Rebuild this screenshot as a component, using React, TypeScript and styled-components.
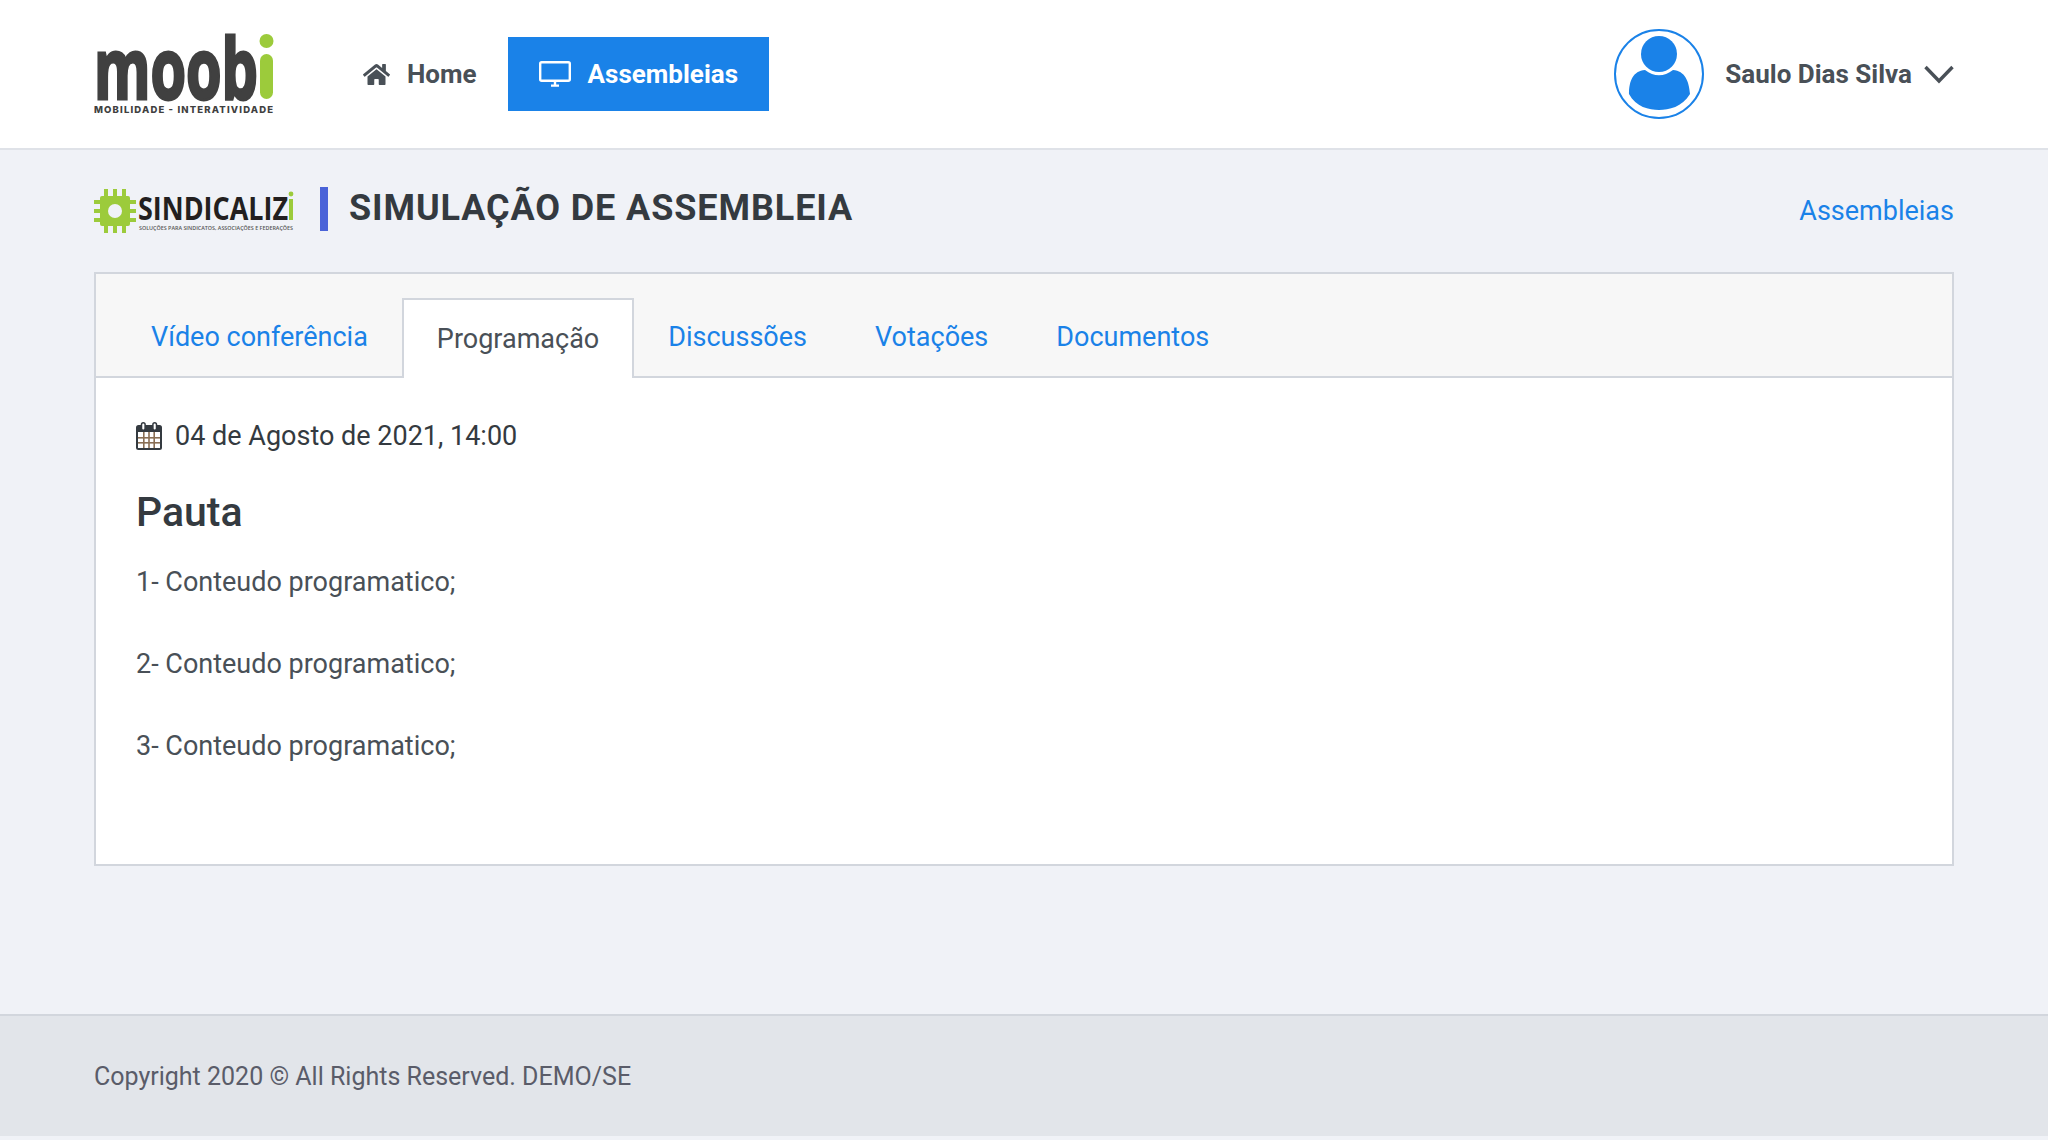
import React from 'react';
import styled, { createGlobalStyle } from 'styled-components';
import { FaHome } from 'react-icons/fa';

const GlobalStyle = createGlobalStyle`
  html, body {
    margin: 0;
    padding: 0;
    background: #f0f2f7;
    font-family: Roboto, "Liberation Sans", sans-serif;
    color: #343a40;
  }
  * {
    box-sizing: border-box;
  }
`;

const Page = styled.div`
  height: 1140px;
  display: flex;
  flex-direction: column;
  overflow: hidden;
`;

const Header = styled.header`
  height: 150px;
  flex: none;
  display: flex;
  align-items: center;
  justify-content: space-between;
  padding: 0 94px;
  background: #fff;
  border-bottom: 2px solid #dfe2e8;
`;

const HeaderLeft = styled.div`
  display: flex;
  align-items: center;
`;

const Nav = styled.nav`
  display: flex;
  align-items: center;
  margin-left: 58px;
`;

const NavItem = styled.a<{ $active?: boolean }>`
  display: flex;
  align-items: center;
  height: 74px;
  padding: 0 31px;
  gap: 17px;
  font-size: 26px;
  font-weight: 700;
  background: ${(p) => (p.$active ? '#1a82e8' : 'transparent')};
  color: ${(p) => (p.$active ? '#fff' : '#495057')};
`;

const UserBox = styled.div`
  display: flex;
  align-items: center;
`;

const UserName = styled.span`
  margin-left: 21px;
  font-size: 26px;
  font-weight: 700;
  color: #495057;
`;

const Chevron = styled.svg`
  margin-left: 12px;
`;

const Main = styled.main`
  flex: 1;
  padding: 0 94px;
`;

const TitleRow = styled.div`
  display: flex;
  align-items: center;
  justify-content: space-between;
  height: 122px;
`;

const TitleLeft = styled.div`
  display: flex;
  align-items: center;
`;

const Title = styled.h1`
  margin: 0 0 4px 26px;
  padding-left: 21px;
  border-left: 8px solid #4a63d8;
  height: 44px;
  line-height: 42px;
  font-size: 36px;
  font-weight: 700;
  letter-spacing: 0.9px;
  color: #343a40;
`;

const TopLink = styled.a`
  font-size: 27px;
  color: #1a82e8;
`;

const Card = styled.section`
  height: 594px;
  background: #fff;
  border: 2px solid #d2d6dd;
`;

const TabBar = styled.div`
  height: 104px;
  display: flex;
  align-items: flex-end;
  padding-left: 21px;
  background: #f7f7f7;
  border-bottom: 2px solid #d2d6dd;
`;

const Tab = styled.a<{ $active?: boolean }>`
  height: ${(p) => (p.$active ? '80px' : '78px')};
  display: flex;
  align-items: center;
  padding: 0 ${(p) => (p.$active ? '33px' : '34px')};
  font-size: 27px;
  color: ${(p) => (p.$active ? '#495057' : '#1a82e8')};
  ${(p) =>
    p.$active &&
    `
    background: #fff;
    border: 2px solid #d2d6dd;
    border-bottom: 0;
    margin-bottom: -2px;
  `}
`;

const CardBody = styled.div`
  padding: 40px 40px 0;
`;

const DateRow = styled.div`
  display: flex;
  align-items: center;
  gap: 13px;
  height: 36px;
  font-size: 27px;
  color: #343a40;
`;

const Heading = styled.h2`
  margin: 32px 0 24px;
  font-size: 41px;
  line-height: 52px;
  font-weight: 500;
  color: #343a40;
`;

const AgendaItem = styled.p`
  margin: 0;
  height: 82px;
  font-size: 27px;
  line-height: 40px;
  color: #495057;
`;

const Footer = styled.footer`
  height: 122px;
  flex: none;
  margin-bottom: 4px;
  display: flex;
  align-items: center;
  padding: 0 94px 0;
  background: #e2e5ea;
  border-top: 2px solid #d2d6dd;
  font-size: 25px;
  color: #5a5c69;
`;

const MoobiLogo = () => (
  <svg width="180" height="82" viewBox="0 0 180 82" aria-label="moobi">
    <text
      x="0"
      y="66"
      fontFamily="Open Sans, sans-serif"
      fontWeight="700"
      fontSize="84"
      fill="#404040"
      stroke="#404040"
      strokeWidth="3"
      textLength="164"
      lengthAdjust="spacingAndGlyphs"
    >
      moob
    </text>
    <rect x="166" y="21" width="13" height="45" rx="6.5" fill="#9ccb3b" />
    <circle cx="172.5" cy="8" r="7" fill="#9ccb3b" />
    <text
      x="0"
      y="80"
      fontFamily="Inter, sans-serif"
      fontWeight="800"
      fontSize="9.5"
      fill="#404040"
      textLength="179"
      lengthAdjust="spacing"
    >
      MOBILIDADE - INTERATIVIDADE
    </text>
  </svg>
);

const SindicaliziLogo = () => (
  <svg width="200" height="44" viewBox="0 0 200 44" aria-label="Sindicalizi">
    <g fill="#9ccb3b">
      <rect x="6" y="7" width="30" height="30" rx="2" />
      <rect x="10" y="0" width="4" height="44" />
      <rect x="19" y="0" width="4" height="44" />
      <rect x="28" y="0" width="4" height="44" />
      <rect x="0" y="11" width="42" height="4" />
      <rect x="0" y="20" width="42" height="4" />
      <rect x="0" y="29" width="42" height="4" />
    </g>
    <circle cx="21" cy="22" r="7" fill="#f0f2f7" />
    <text
      x="44"
      y="31"
      fontFamily="Open Sans, sans-serif"
      fontWeight="700"
      fontSize="32"
      fill="#231f20"
      textLength="150"
      lengthAdjust="spacingAndGlyphs"
    >
      SINDICALIZ
    </text>
    <rect x="195" y="10" width="4" height="21" fill="#9ccb3b" />
    <circle cx="197" cy="5" r="2.4" fill="#9ccb3b" />
    <text
      x="45"
      y="41"
      fontFamily="Open Sans, sans-serif"
      fontWeight="600"
      fontSize="6"
      fill="#555"
      textLength="154"
      lengthAdjust="spacingAndGlyphs"
    >
      SOLUÇÕES PARA SINDICATOS, ASSOCIAÇÕES E FEDERAÇÕES
    </text>
  </svg>
);

const MonitorIcon = () => (
  <svg width="32" height="26" viewBox="0 0 32 26" fill="none" stroke="#fff" strokeWidth="2.4">
    <rect x="1.2" y="1.2" width="29.6" height="18.6" rx="1.5" />
    <path d="M12 24.6h8M16 20v4" />
  </svg>
);

const Avatar = () => (
  <svg width="90" height="90" viewBox="0 0 90 90">
    <circle cx="45" cy="45" r="44" fill="#fff" stroke="#1a82e8" strokeWidth="2" />
    <circle cx="45" cy="25" r="18" fill="#1a82e8" />
    <path
      d="M15 65 C15 52 19 42 31 41 C40 48 50 48 59 41 C71 42 75 52 76 65 C68 78 55 81 45 81 C35 81 22 78 15 65 Z"
      fill="#1a82e8"
    />
  </svg>
);

const CalendarIcon = () => (
  <svg width="26" height="28" viewBox="0 0 26 28">
    <rect x="0" y="3" width="26" height="25" rx="2.5" fill="#343a40" />
    <rect x="2" y="10" width="22" height="16" fill="#fff" />
    <g fill="#8a6f55">
      <rect x="7" y="10" width="1.6" height="16" />
      <rect x="12.2" y="10" width="1.6" height="16" />
      <rect x="17.4" y="10" width="1.6" height="16" />
      <rect x="2" y="15" width="22" height="1.6" />
      <rect x="2" y="20" width="22" height="1.6" />
    </g>
    <rect x="5.5" y="0.8" width="3.6" height="7.4" rx="1.8" fill="#fff" stroke="#343a40" strokeWidth="1.5" />
    <rect x="16.9" y="0.8" width="3.6" height="7.4" rx="1.8" fill="#fff" stroke="#343a40" strokeWidth="1.5" />
  </svg>
);

const agenda = ['1- Conteudo programatico;', '2- Conteudo programatico;', '3- Conteudo programatico;'];

const App: React.FC = () => {
  return (
    <Page>
      <GlobalStyle />
      <Header>
        <HeaderLeft>
          <MoobiLogo />
          <Nav>
            <NavItem>
              <FaHome size={27} />
              Home
            </NavItem>
            <NavItem $active>
              <MonitorIcon />
              Assembleias
            </NavItem>
          </Nav>
        </HeaderLeft>
        <UserBox>
          <Avatar />
          <UserName>Saulo Dias Silva</UserName>
          <Chevron width="30" height="20" viewBox="0 0 30 20" fill="none" stroke="#495057" strokeWidth="3.4">
            <path d="M1.5 3 L15 17 L28.5 3" />
          </Chevron>
        </UserBox>
      </Header>
      <Main>
        <TitleRow>
          <TitleLeft>
            <SindicaliziLogo />
            <Title>SIMULAÇÃO DE ASSEMBLEIA</Title>
          </TitleLeft>
          <TopLink>Assembleias</TopLink>
        </TitleRow>
        <Card>
          <TabBar>
            <Tab>Vídeo conferência</Tab>
            <Tab $active>Programação</Tab>
            <Tab>Discussões</Tab>
            <Tab>Votações</Tab>
            <Tab>Documentos</Tab>
          </TabBar>
          <CardBody>
            <DateRow>
              <CalendarIcon />
              04 de Agosto de 2021, 14:00
            </DateRow>
            <Heading>Pauta</Heading>
            {agenda.map((item) => (
              <AgendaItem key={item}>{item}</AgendaItem>
            ))}
          </CardBody>
        </Card>
      </Main>
      <Footer>Copyright 2020 © All Rights Reserved. DEMO/SE</Footer>
    </Page>
  );
};

export default App;
